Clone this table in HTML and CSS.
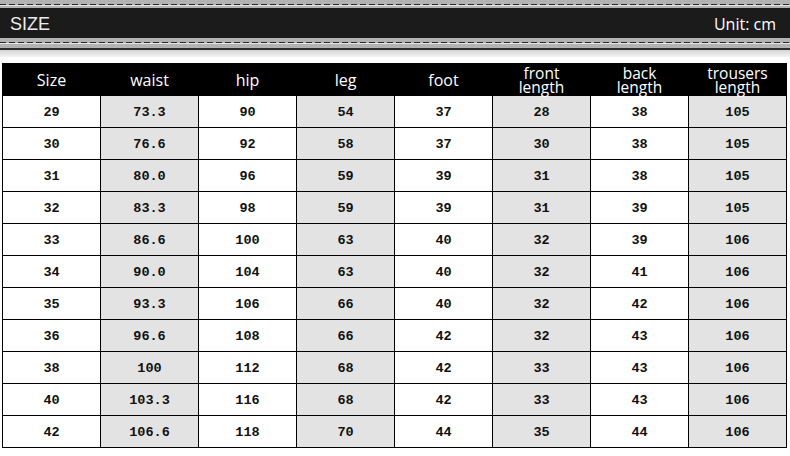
FILE: index.html
```html
<!DOCTYPE html>
<html>
<head>
<meta charset="utf-8">
<link rel="stylesheet" href="styles.css">
</head>
<body>
<div class="banner">
  <div class="strip strip-top"><div class="stitch"></div></div>
  <div class="band">
    <span class="band-title">SIZE</span>
    <span class="band-unit">Unit: cm</span>
  </div>
  <div class="strip strip-bottom"><div class="stitch"></div></div>
  <div class="edge"></div>
  <div class="fade"></div>
</div>
<table class="chart">
  <thead>
    <tr>
      <th>Size</th><th>waist</th><th>hip</th><th>leg</th><th>foot</th>
      <th class="two">front<br>length</th><th class="two">back<br>length</th><th class="two">trousers<br>length</th>
    </tr>
  </thead>
  <tbody>
    <tr><td>29</td><td>73.3</td><td>90</td><td>54</td><td>37</td><td>28</td><td>38</td><td>105</td></tr>
    <tr><td>30</td><td>76.6</td><td>92</td><td>58</td><td>37</td><td>30</td><td>38</td><td>105</td></tr>
    <tr><td>31</td><td>80.0</td><td>96</td><td>59</td><td>39</td><td>31</td><td>38</td><td>105</td></tr>
    <tr><td>32</td><td>83.3</td><td>98</td><td>59</td><td>39</td><td>31</td><td>39</td><td>105</td></tr>
    <tr><td>33</td><td>86.6</td><td>100</td><td>63</td><td>40</td><td>32</td><td>39</td><td>106</td></tr>
    <tr><td>34</td><td>90.0</td><td>104</td><td>63</td><td>40</td><td>32</td><td>41</td><td>106</td></tr>
    <tr><td>35</td><td>93.3</td><td>106</td><td>66</td><td>40</td><td>32</td><td>42</td><td>106</td></tr>
    <tr><td>36</td><td>96.6</td><td>108</td><td>66</td><td>42</td><td>32</td><td>43</td><td>106</td></tr>
    <tr><td>38</td><td>100</td><td>112</td><td>68</td><td>42</td><td>33</td><td>43</td><td>106</td></tr>
    <tr><td>40</td><td>103.3</td><td>116</td><td>68</td><td>42</td><td>33</td><td>43</td><td>106</td></tr>
    <tr><td>42</td><td>106.6</td><td>118</td><td>70</td><td>44</td><td>35</td><td>44</td><td>106</td></tr>
  </tbody>
</table>
</body>
</html>
```
FILE: styles.css
```css
html, body {
  margin: 0;
  padding: 0;
  background: #ffffff;
}
body {
  width: 790px;
  height: 456px;
  overflow: hidden;
  font-family: "Open Sans", "Noto Sans", sans-serif;
}
.banner {
  display: flex;
  flex-direction: column;
}
.strip {
  background: #b3b3b3;
  display: flex;
  flex-direction: column;
}
.strip-top {
  height: 8px;
  padding-top: 4px;
  box-sizing: border-box;
}
.strip-bottom {
  height: 10px;
  padding-top: 4px;
  box-sizing: border-box;
}
.stitch {
  height: 1px;
  background: repeating-linear-gradient(90deg, #2a2a2a 0 6px, transparent 6px 9px);
  box-shadow: 0 1px 0 #e6e6e6;
}
.band {
  height: 30px;
  background: #1b1b1b;
  display: flex;
  align-items: center;
  justify-content: space-between;
  padding: 0 14px 0 10px;
  color: #ffffff;
}
.band-title {
  font-family: "Liberation Sans", Arial, sans-serif;
  font-size: 18px;
  color: #ececec;
  padding-top: 3px;
}
.band-unit {
  font-size: 16px;
  font-weight: 500;
  padding-top: 2px;
}
.edge {
  height: 2px;
  background: #2c2c2c;
}
.fade {
  height: 7px;
  background: linear-gradient(#d4d4d4, #f4f4f4);
  margin-bottom: 6px;
}
.chart {
  margin-left: 2px;
  border-collapse: collapse;
  table-layout: fixed;
  width: 785px;
}
.chart th, .chart td {
  border: 1px solid #000000;
  width: 97px;
  padding: 0;
  text-align: center;
}
.chart thead tr {
  height: 32px;
}
.chart th {
  background: #000000;
  color: #ffffff;
  font-weight: 500;
  font-size: 16px;
  line-height: 16px;
}
.chart th.two {
  font-size: 15.5px;
  line-height: 14px;
}
.chart tbody tr {
  height: 32px;
}
.chart td {
  font-family: "Liberation Mono", "DejaVu Sans Mono", monospace;
  font-weight: bold;
  font-size: 13.5px;
  color: #111111;
  background: #ffffff;
  padding-top: 2px;
}
.chart td:nth-child(even) {
  background: #e3e3e3;
}
```
